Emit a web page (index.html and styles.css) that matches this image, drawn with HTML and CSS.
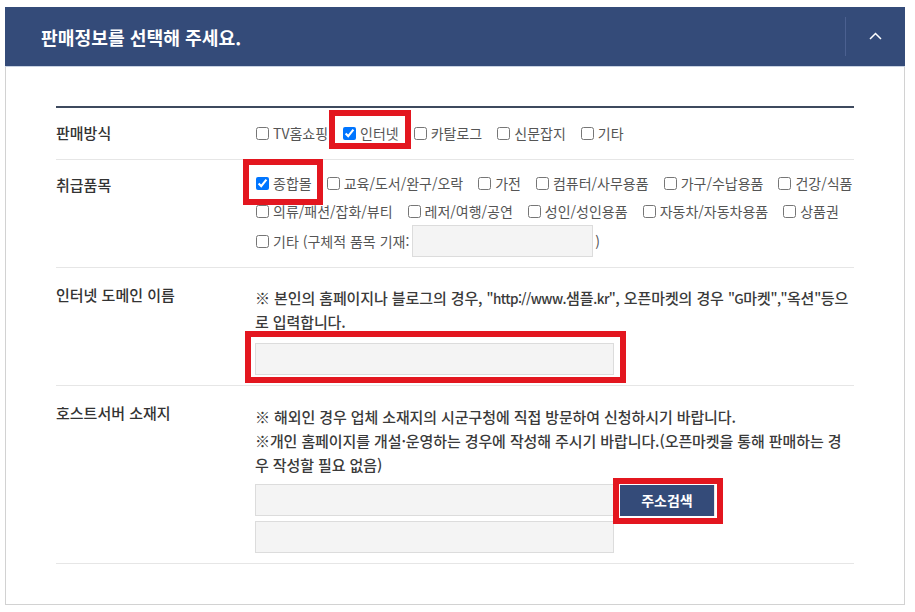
FILE: index.html
```html
<!DOCTYPE html>
<html lang="ko">
<head>
    <meta charset="UTF-8">
    <meta name="viewport" content="width=device-width, initial-scale=1.0">
    <title>판매정보</title>
    <link rel="stylesheet" href="styles.css">
</head>
<body>
    <div class="panel">
        <div class="panel-head">
            <h2>판매정보를 선택해 주세요.</h2>
            <button class="toggle" type="button">
                <svg width="13" height="8" viewBox="0 0 13 8"><polyline points="1,7 6.5,1.5 12,7" fill="none" stroke="#fff" stroke-width="1.5"/></svg>
            </button>
        </div>

        <div class="panel-body">
            <div class="sheet">
                <div class="row row-method">
                    <div class="row-label">판매방식</div>
                    <div class="row-body">
                        <div class="opts">
                            <label class="opt"><input type="checkbox">TV홈쇼핑</label>
                            <label class="opt mark mark-a"><input type="checkbox" checked>인터넷</label>
                            <label class="opt"><input type="checkbox">카탈로그</label>
                            <label class="opt"><input type="checkbox">신문잡지</label>
                            <label class="opt"><input type="checkbox">기타</label>
                        </div>
                    </div>
                </div>

                <div class="row row-items">
                    <div class="row-label">취급품목</div>
                    <div class="row-body">
                        <div class="opts">
                            <label class="opt mark mark-b"><input type="checkbox" checked>종합몰</label>
                            <label class="opt"><input type="checkbox">교육/도서/완구/오락</label>
                            <label class="opt"><input type="checkbox">가전</label>
                            <label class="opt"><input type="checkbox">컴퓨터/사무용품</label>
                            <label class="opt"><input type="checkbox">가구/수납용품</label>
                            <label class="opt"><input type="checkbox">건강/식품</label>
                        </div>
                        <div class="opts">
                            <label class="opt"><input type="checkbox">의류/패션/잡화/뷰티</label>
                            <label class="opt"><input type="checkbox">레저/여행/공연</label>
                            <label class="opt"><input type="checkbox">성인/성인용품</label>
                            <label class="opt"><input type="checkbox">자동차/자동차용품</label>
                            <label class="opt"><input type="checkbox">상품권</label>
                        </div>
                        <div class="opts opts-etc">
                            <label class="opt"><input type="checkbox">기타 (구체적 품목 기재:</label>
                            <input type="text" class="field field-etc">
                            <span class="paren">)</span>
                        </div>
                    </div>
                </div>

                <div class="row row-domain">
                    <div class="row-label">인터넷 도메인 이름</div>
                    <div class="row-body">
                        <p class="note">※ 본인의 홈페이지나 블로그의 경우, <span class="latin">"http://www.</span>샘플<span class="latin">.kr"</span>, 오픈마켓의 경우 <span class="latin">"G</span>마켓<span class="latin">","</span>옥션<span class="latin">"</span>등으<br>로 입력합니다.</p>
                        <div class="mark mark-c field-wrap">
                            <input type="text" class="field">
                        </div>
                    </div>
                </div>

                <div class="row row-host">
                    <div class="row-label">호스트서버 소재지</div>
                    <div class="row-body">
                        <p class="note">※ 해외인 경우 업체 소재지의 시군구청에 직접 방문하여 신청하시기 바랍니다.<br>※개인 홈페이지를 개설·운영하는 경우에 작성해 주시기 바랍니다.(오픈마켓을 통해 판매하는 경<br>우 작성할 필요 없음)</p>
                        <div class="addr">
                            <input type="text" class="field">
                            <button type="button" class="btn-addr mark mark-d">주소검색</button>
                        </div>
                        <div class="addr">
                            <input type="text" class="field">
                        </div>
                    </div>
                </div>
            </div>
        </div>
    </div>
</body>
</html>
```

FILE: styles.css
```css
body {
    margin: 0;
    padding: 0;
    background-color: #fff;
    font-family: "Noto Sans CJK KR", "Noto Sans", sans-serif;
    color: #333;
}
.panel {
    width: 900px;
    margin: 7px 0 0 5px;
    box-sizing: border-box;
    border: 1px solid #d2d2d2;
    border-top: none;
}
.panel-head {
    display: flex;
    align-items: center;
    justify-content: space-between;
    height: 59px;
    margin: 0 -1px;
    padding-left: 36px;
    background-color: #344b79;
    border-bottom: 1px solid #c8d2e2;
}
.panel-head h2 {
    margin: 0;
    color: #fff;
    font-size: 18.2px;
    font-weight: bold;
}
.toggle {
    display: flex;
    align-items: center;
    justify-content: center;
    width: 60px;
    height: 39px;
    padding: 0 0 2px 0;
    border: none;
    border-left: 1px solid #4b6090;
    background: none;
    cursor: pointer;
}
.panel-body {
    padding: 39px 50px 40px 50px;
}
.sheet {
    border-top: 2px solid #3e4a5e;
}
.row {
    display: flex;
    border-bottom: 1px solid #e6e6e6;
}
.row-label {
    width: 199px;
    flex-shrink: 0;
    font-size: 15px;
    font-weight: 500;
    line-height: 20px;
    color: #333;
    padding-top: 17px;
}
.row-body {
    flex: 1;
    padding-bottom: 10px;
}
.row-method .row-label {
    padding-top: 15px;
}
.row-method .row-body {
    padding: 15px 0 16px 0;
}
.row-items .row-label {
    padding-top: 15px;
}
.row-items .row-body {
    padding-top: 9px;
}
.row-domain .row-body {
    padding-top: 18px;
}
.row-host .row-body {
    padding-top: 19px;
}
.opts {
    display: flex;
    align-items: center;
    gap: 14px;
    height: 28px;
    white-space: nowrap;
}
.row-method .opts {
    height: 20px;
}
.opts-etc {
    gap: 0;
    height: 32px;
}
.opt {
    display: inline-flex;
    align-items: center;
    font-size: 14px;
    line-height: 20px;
    color: #555;
    cursor: pointer;
}
.opt input {
    width: 13px;
    height: 13px;
    margin: 0 4px 0 1px;
}
.paren {
    font-size: 14px;
    color: #555;
    margin-left: 2px;
}
.field {
    display: block;
    width: 359px;
    height: 32px;
    box-sizing: border-box;
    border: 1px solid #dcdcdc;
    background-color: #f4f4f4;
    outline: none;
}
.field-etc {
    width: 181px;
    margin-left: 3px;
}
.note {
    margin: 0;
    font-size: 15px;
    line-height: 24px;
    color: #3a3a3a;
    font-weight: 500;
    white-space: nowrap;
    letter-spacing: -0.1px;
}
.note .latin {
    font-size: 13.5px;
    letter-spacing: -0.6px;
}
.field-wrap {
    width: 359px;
    margin-top: 9px;
}
.addr {
    display: flex;
    align-items: center;
    gap: 6px;
    margin-top: 7px;
}
.addr + .addr {
    margin-top: 5px;
}
.btn-addr {
    width: 95px;
    height: 31px;
    border: none;
    border-right: 1px solid #e8e8e8;
    background-color: #344b79;
    color: #fff;
    font-family: inherit;
    font-size: 14px;
    font-weight: bold;
    cursor: pointer;
}

/* red highlight boxes drawn over the form */
.mark {
    position: relative;
}
.mark::after {
    content: "";
    position: absolute;
    border: 6px solid #e3161f;
    pointer-events: none;
}
.mark-a::after {
    left: -13px;
    right: -12px;
    top: -13px;
    bottom: -6px;
}
.mark-b::after {
    left: -12px;
    right: -11px;
    top: -14px;
    bottom: -12px;
}
.mark-c::after {
    left: -10px;
    right: -12px;
    top: -12px;
    bottom: -8px;
}
.mark-d::after {
    left: -7px;
    right: -9px;
    top: -7px;
    bottom: -8px;
}
```
